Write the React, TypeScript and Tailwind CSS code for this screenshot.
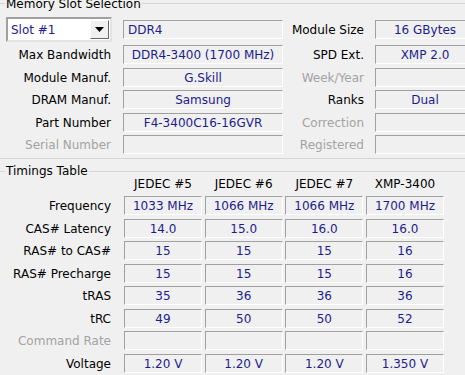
import React from 'react';

const VALUE = 'text-[#1c1c8e]';

function Field({ value = '', left = false, className = '' }: { value?: string; left?: boolean; className?: string }) {
  return (
    <div
      className={`h-[19px] shrink-0 border border-t-[#a0a0a0] border-l-[#a0a0a0] border-b-white border-r-white pt-[1px] leading-[17px] whitespace-nowrap overflow-hidden ${VALUE} ${
        left ? 'text-left pl-[4px]' : 'text-center'
      } ${className}`}
    >
      {value}
    </div>
  );
}

function Label({ text, dim = false, className = '' }: { text: string; dim?: boolean; className?: string }) {
  return (
    <div
      className={`h-[19px] pt-[1px] text-right whitespace-nowrap leading-[19px] ${
        dim ? 'text-[#a3a3a3]' : 'text-black'
      } ${className}`}
    >
      {text}
    </div>
  );
}

function SlotCombo() {
  return (
    <div className="ml-[5px] w-[106px] h-[25px] border-2 border-t-[#a0a0a0] border-l-[#a0a0a0] border-b-[#e3e3e3] border-r-[#e3e3e3] bg-white flex items-center">
      <span className={`pl-[3px] pt-[1px] flex-1 ${VALUE}`}>Slot #1</span>
      <div className="w-[19px] h-[19px] mr-[1px] bg-[#f0f0f0] border border-t-white border-l-white border-b-[#696969] border-r-[#696969] flex items-center justify-center">
        <svg width="9" height="5" viewBox="0 0 9 5">
          <path d="M0 0h9L4.5 5z" fill="#000" />
        </svg>
      </div>
    </div>
  );
}

const topRows: { label: string; dim?: boolean; value: string; rLabel: string; rDim?: boolean; rValue: string }[] = [
  { label: 'Max Bandwidth', value: 'DDR4-3400 (1700 MHz)', rLabel: 'SPD Ext.', rValue: 'XMP 2.0' },
  { label: 'Module Manuf.', value: 'G.Skill', rLabel: 'Week/Year', rDim: true, rValue: '' },
  { label: 'DRAM Manuf.', value: 'Samsung', rLabel: 'Ranks', rValue: 'Dual' },
  { label: 'Part Number', value: 'F4-3400C16-16GVR', rLabel: 'Correction', rDim: true, rValue: '' },
  { label: 'Serial Number', dim: true, value: '', rLabel: 'Registered', rDim: true, rValue: '' },
];

const columns = ['JEDEC #5', 'JEDEC #6', 'JEDEC #7', 'XMP-3400'];

const timings: { label: string; dim?: boolean; values: string[] }[] = [
  { label: 'Frequency', values: ['1033 MHz', '1066 MHz', '1066 MHz', '1700 MHz'] },
  { label: 'CAS# Latency', values: ['14.0', '15.0', '16.0', '16.0'] },
  { label: 'RAS# to CAS#', values: ['15', '15', '15', '16'] },
  { label: 'RAS# Precharge', values: ['15', '15', '15', '16'] },
  { label: 'tRAS', values: ['35', '36', '36', '36'] },
  { label: 'tRC', values: ['49', '50', '50', '52'] },
  { label: 'Command Rate', dim: true, values: ['', '', '', ''] },
  { label: 'Voltage', values: ['1.20 V', '1.20 V', '1.20 V', '1.350 V'] },
];

export default function App() {
  return (
    <div
      className="w-[465px] h-[375px] overflow-hidden bg-[#f0f0f0] text-[12px]"
      style={{ fontFamily: '"DejaVu Sans", Tahoma, sans-serif' }}
    >
      {/* Memory slot selection */}
      <div className="relative mt-[3px] -mx-[1px] w-[520px] border border-[#d5d5d5] pt-[13px] pb-[4px] pl-[1px]">
        <span className="absolute -top-[7px] left-[5px] px-[1px] bg-[#f0f0f0] leading-[14px] text-black">
          Memory Slot Selection
        </span>
        <div className="flex items-center h-[25px]">
          <div className="w-[122px]">
            <SlotCombo />
          </div>
          <Field value="DDR4" left className="w-[160px]" />
          <Label text="Module Size" className="w-[81px]" />
          <Field value="16 GBytes" className="ml-[11px] w-[100px]" />
        </div>
        <div className="flex flex-col gap-[3.5px] mt-[3px]">
          {topRows.map((r) => (
            <div key={r.label} className="flex items-center h-[19px]">
              <Label text={r.label} dim={r.dim} className="w-[110px]" />
              <Field value={r.value} className="ml-[12px] w-[160px]" />
              <Label text={r.rLabel} dim={r.rDim} className="w-[81px]" />
              <Field value={r.rValue} className="ml-[11px] w-[100px]" />
            </div>
          ))}
        </div>
      </div>

      {/* Timings table */}
      <div className="relative mt-[12px] -mx-[1px] w-[520px] h-[260px] border border-[#d5d5d5] pl-[1px]">
        <span className="absolute -top-[8px] left-[5px] px-[1px] bg-[#f0f0f0] leading-[14px] text-black">
          Timings Table
        </span>
        <div className="flex mt-[5px] h-[14px] leading-[14px]">
          <div className="w-[110px] mr-[13px]" />
          <div className="flex gap-[2.67px]">
            {columns.map((c) => (
              <div key={c} className="w-[78px] text-center text-black">
                {c}
              </div>
            ))}
          </div>
        </div>
        <div className="flex flex-col gap-[3.5px] mt-[5px]">
          {timings.map((t) => (
            <div key={t.label} className="flex items-center h-[19px]">
              <Label text={t.label} dim={t.dim} className="w-[110px] mr-[13px]" />
              <div className="flex gap-[2.67px]">
                {t.values.map((v, i) => (
                  <Field key={i} value={v} className="w-[78px]" />
                ))}
              </div>
            </div>
          ))}
        </div>
      </div>
    </div>
  );
}
